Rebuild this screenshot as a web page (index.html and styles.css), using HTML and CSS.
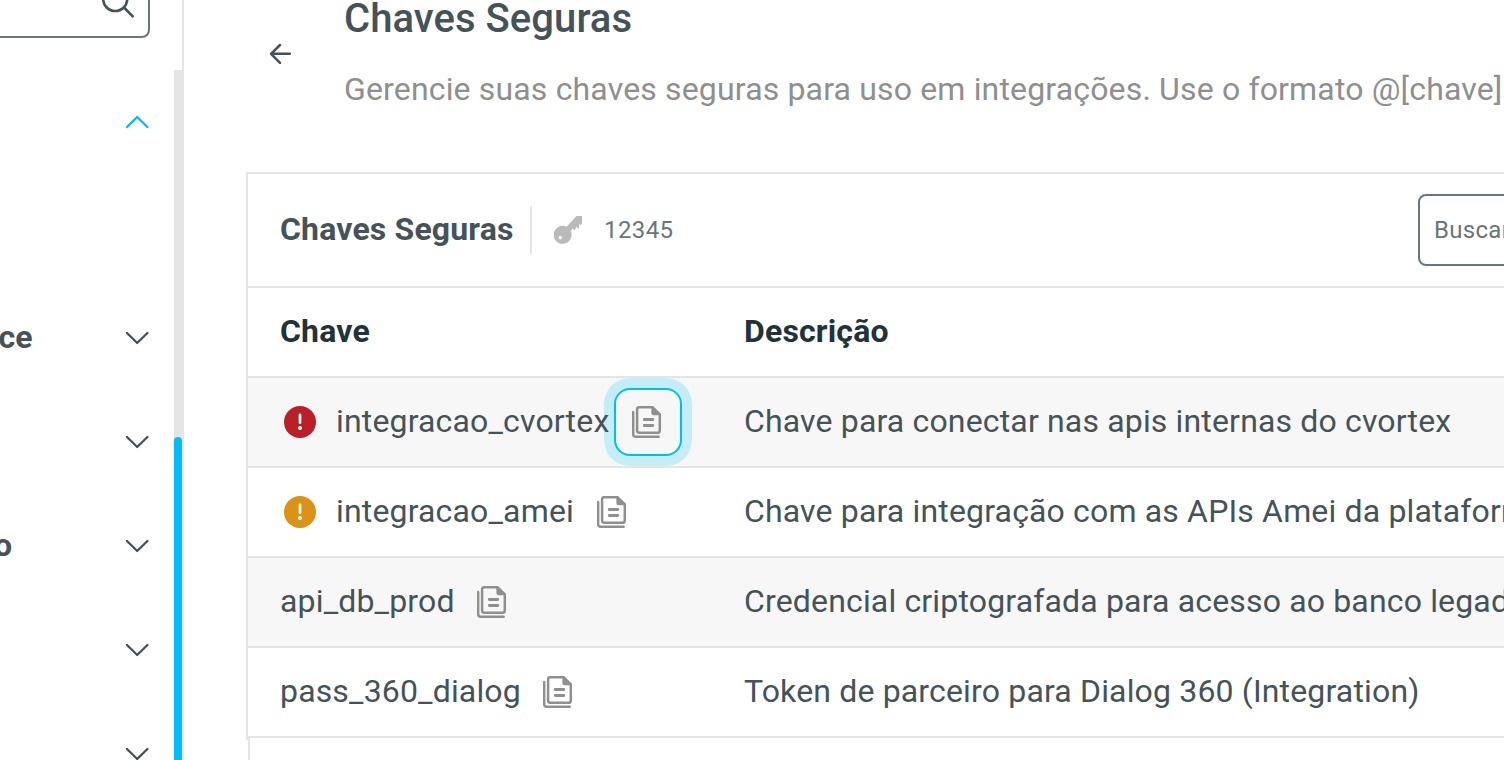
FILE: index.html
```html
<!DOCTYPE html>
<html lang="pt-BR">
<head>
    <meta charset="UTF-8">
    <meta name="viewport" content="width=device-width, initial-scale=1.0">
    <title>Chaves Seguras</title>
    <link rel="stylesheet" href="styles.css">
</head>
<body>

    <svg class="sprite">
        <symbol id="chevron" viewBox="0 0 24 14">
            <path d="M2 2 L12.2 12 L22.4 2" fill="none" stroke="currentColor" stroke-width="2.4" stroke-linecap="round" stroke-linejoin="round"/>
        </symbol>
        <symbol id="copy" viewBox="0 0 32 34">
            <path d="M1.2 7 V29.2 Q1.2 31.8 3.8 31.8 H26.7" fill="none" stroke="currentColor" stroke-width="2.4" stroke-linecap="round"/>
            <path d="M7.2 2.2 H20 L27.8 9.5 V25.4 Q27.8 27.8 25.4 27.8 H7.2 Q5.1 27.8 5.1 25.5 V4.4 Q5.1 2.2 7.2 2.2 Z" fill="none" stroke="currentColor" stroke-width="2.5"/>
            <path d="M19.4 1 H21 L29 9 V10.2 H21.6 Q19.4 10.2 19.4 8 Z" fill="currentColor"/>
            <path d="M12.3 14.5 H20.8 M12.3 20.5 H20.8" stroke="currentColor" stroke-width="2.9" stroke-linecap="round"/>
        </symbol>
        <symbol id="alert" viewBox="0 0 32 32">
            <circle cx="16" cy="16" r="16" fill="currentColor"/>
            <path d="M16 8.8 V16.6" stroke="#fff" stroke-width="2.7" stroke-linecap="round"/>
            <circle cx="16" cy="21.9" r="2" fill="#fff"/>
        </symbol>
    </svg>

    <div class="app">
        <aside class="sidebar">
            <div class="search-box">
                <svg class="search-icon" viewBox="0 0 34 34" width="34" height="34">
                    <circle cx="15.2" cy="15" r="12" fill="none" stroke="currentColor" stroke-width="2.6"/>
                    <path d="M24 23.5 L32.7 32.3" stroke="currentColor" stroke-width="2.6" stroke-linecap="round"/>
                </svg>
            </div>
            <div class="menu-area">
                <ul class="menu">
                    <li class="menu-item open"><svg class="chevron"><use href="#chevron"/></svg></li>
                    <li class="menu-item"><span class="menu-label ce">ce</span><svg class="chevron"><use href="#chevron"/></svg></li>
                    <li class="menu-item"><svg class="chevron"><use href="#chevron"/></svg></li>
                    <li class="menu-item"><span class="menu-label o">o</span><svg class="chevron"><use href="#chevron"/></svg></li>
                    <li class="menu-item"><svg class="chevron"><use href="#chevron"/></svg></li>
                    <li class="menu-item"><svg class="chevron"><use href="#chevron"/></svg></li>
                </ul>
                <div class="scroll-track"><div class="scroll-thumb"></div></div>
            </div>
        </aside>

        <main class="content">
            <header class="page-header">
                <svg class="back" viewBox="0 0 24 22" width="24" height="22">
                    <path d="M21.8 10.8 H3 M12 2 L3 10.8 L12 19.8" fill="none" stroke="currentColor" stroke-width="2.5" stroke-linecap="round" stroke-linejoin="round"/>
                </svg>
                <div class="page-heading">
                    <h1>Chaves Seguras</h1>
                    <p>Gerencie suas chaves seguras para uso em integrações. Use o formato @[chave]</p>
                </div>
            </header>

            <section class="card">
                <div class="toolbar">
                    <h2>Chaves Seguras</h2>
                    <div class="counter">
                        <svg class="key" viewBox="0 0 28 28" width="28" height="28">
                            <path fill="currentColor" fill-rule="evenodd" d="M22.5 0 H28 V7.2 L26.8 9.3 L25.3 7.8 L24.6 13 L22.3 10.8 L20.8 14.4 L18.6 12.6 L16.8 15 A9 9 0 1 1 12.5 10.7 Z M6.3 19.8 A1.8 1.8 0 1 0 6.3 23.4 A1.8 1.8 0 1 0 6.3 19.8 Z"/>
                        </svg>
                        <span>12345</span>
                    </div>
                    <div class="filter">Buscar</div>
                </div>
                <div class="row head"><span>Chave</span><span>Descrição</span></div>
                <div class="row odd">
                    <div class="cell">
                        <svg class="alert error"><use href="#alert"/></svg>
                        <span class="name">integracao_cvortex</span>
                        <button class="copy focused"><svg><use href="#copy"/></svg></button>
                    </div>
                    <span>Chave para conectar nas apis internas do cvortex</span>
                </div>
                <div class="row">
                    <div class="cell">
                        <svg class="alert warning"><use href="#alert"/></svg>
                        <span class="name">integracao_amei</span>
                        <button class="copy"><svg><use href="#copy"/></svg></button>
                    </div>
                    <span>Chave para integração com as APIs Amei da plataforma</span>
                </div>
                <div class="row odd">
                    <div class="cell">
                        <span class="name">api_db_prod</span>
                        <button class="copy"><svg><use href="#copy"/></svg></button>
                    </div>
                    <span>Credencial criptografada para acesso ao banco legado</span>
                </div>
                <div class="row">
                    <div class="cell">
                        <span class="name">pass_360_dialog</span>
                        <button class="copy"><svg><use href="#copy"/></svg></button>
                    </div>
                    <span>Token de parceiro para Dialog 360 (Integration)</span>
                </div>
            </section>
            <div class="card-footer"></div>
        </main>
    </div>

</body>
</html>
```
FILE: styles.css
```css
* {
    box-sizing: border-box;
}

body {
    margin: 0;
    overflow: hidden;
    font-family: Roboto, "Liberation Sans", sans-serif;
    font-size: 32px;
    letter-spacing: 0.16px;
    color: #455359;
    background-color: #fff;
}

.sprite {
    display: none;
}

.app {
    display: flex;
    height: 760px;
    overflow: hidden;
}

/* Sidebar */
.sidebar {
    display: flex;
    flex-direction: column;
    flex: none;
    width: 184px;
    border-right: 2px solid #e5e5e5;
}

.search-box {
    display: flex;
    flex: none;
    justify-content: flex-end;
    width: 170px;
    height: 72px;
    margin: -34px 0 32px -20px;
    padding: 16px 14px 0 0;
    border: 2px solid #68767c;
    border-radius: 8px;
}

.search-icon {
    flex: none;
}

.menu-area {
    display: flex;
    flex: 1;
    justify-content: space-between;
}

.menu {
    flex: 1;
    margin: 0;
    padding: 0;
    list-style: none;
}

.menu-item {
    display: flex;
    align-items: center;
    height: 104px;
    padding-right: 25px;
    font-weight: 700;
}

.menu-item.open {
    margin-bottom: 112px;
    color: #00bdf5;
}

.menu-item.open .chevron {
    transform: scaleY(-1);
}

.menu-label {
    padding-bottom: 2px;
}

.menu-label.ce {
    margin-left: -1.5px;
}

.menu-label.o {
    margin-left: -6px;
}

.chevron {
    width: 24px;
    height: 14px;
    margin-left: auto;
}

.scroll-track {
    width: 8px;
    padding-top: 367px;
    background-color: #e5e5e5;
}

.scroll-thumb {
    height: 400px;
    border-radius: 4px;
    background-color: #00bdf5;
}

/* Content */
.content {
    flex: 1;
    min-width: 0;
    padding-left: 62px;
}

.page-header {
    display: flex;
    height: 172px;
    padding-left: 22px;
}

.back {
    flex: none;
    margin: 43px 52px 0 0;
}

.page-heading {
    white-space: nowrap;
}

h1 {
    margin: -5px 0 0;
    font-size: 40px;
    font-weight: 500;
    line-height: 48px;
    letter-spacing: 0.06px;
}

.page-heading p {
    margin: 26px 0 0;
    line-height: 40px;
    color: #8f8f8f;
}

.card {
    width: 1604px;
    height: 568px;
    border: solid #e5e5e5;
    border-width: 2px 0 0 2px;
}

.card-footer {
    height: 40px;
    margin: -2px 0 0 2px;
    border-left: 2px solid #e5e5e5;
}

.toolbar {
    display: flex;
    align-items: center;
    height: 114px;
    padding: 0 32px;
    border-bottom: 2px solid #e5e5e5;
}

h2 {
    width: 250px;
    margin: 0;
    padding-bottom: 2px;
    font-size: 32px;
    font-weight: 700;
}

.counter {
    display: flex;
    align-items: center;
    gap: 22px;
    height: 48px;
    padding-left: 22px;
    border-left: 2px solid #e5e5e5;
    font-size: 24px;
    letter-spacing: 0.4px;
    color: #68767c;
}

.key {
    color: #bababa;
}

.filter {
    width: 400px;
    height: 72px;
    margin-left: auto;
    padding-left: 14px;
    border: 2px solid #68767c;
    border-radius: 8px;
    font-size: 24px;
    line-height: 68px;
    letter-spacing: 0.3px;
    color: #68767c;
}

.row {
    display: grid;
    grid-template-columns: 464px 1fr;
    align-items: center;
    height: 90px;
    padding-left: 32px;
    border-bottom: 2px solid #e5e5e5;
    white-space: nowrap;
}

.row span {
    padding-bottom: 2px;
}

.row.odd {
    background-color: #f7f7f7;
}

.row.head {
    font-weight: 700;
    color: #21323b;
}

.cell {
    display: flex;
    align-items: center;
}

.name {
    z-index: 1;
}

.alert {
    width: 32px;
    height: 32px;
    margin: 0 20px 0 4px;
}

.error {
    color: #ba1f28;
}

.warning {
    color: #db9215;
}

.copy {
    display: flex;
    align-items: center;
    justify-content: center;
    width: 68px;
    height: 68px;
    margin-left: 4.6px;
    padding: 0;
    border: 2px solid transparent;
    border-radius: 16px;
    background: none;
    color: #8f8f8f;
}

.copy svg {
    width: 32px;
    height: 34px;
}

.copy.focused {
    border-color: #00bdf5;
    background-color: #f7f7f7;
    box-shadow: 0 0 0 10px #c5edf6;
}
```
